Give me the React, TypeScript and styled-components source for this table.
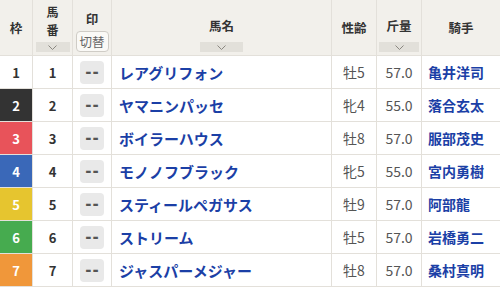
import styled, { createGlobalStyle } from 'styled-components';

interface Horse {
  waku: number;
  umaban: number;
  name: string;
  sexAge: string;
  weight: string;
  jockey: string;
}

const horses: Horse[] = [
  { waku: 1, umaban: 1, name: 'レアグリフォン', sexAge: '牡5', weight: '57.0', jockey: '亀井洋司' },
  { waku: 2, umaban: 2, name: 'ヤマニンパッセ', sexAge: '牝4', weight: '55.0', jockey: '落合玄太' },
  { waku: 3, umaban: 3, name: 'ボイラーハウス', sexAge: '牡8', weight: '57.0', jockey: '服部茂史' },
  { waku: 4, umaban: 4, name: 'モノノフブラック', sexAge: '牝5', weight: '55.0', jockey: '宮内勇樹' },
  { waku: 5, umaban: 5, name: 'スティールペガサス', sexAge: '牡9', weight: '57.0', jockey: '阿部龍' },
  { waku: 6, umaban: 6, name: 'ストリーム', sexAge: '牡5', weight: '57.0', jockey: '岩橋勇二' },
  { waku: 7, umaban: 7, name: 'ジャスパーメジャー', sexAge: '牡8', weight: '57.0', jockey: '桑村真明' },
];

const wakuColors: Record<number, { bg: string; fg: string }> = {
  1: { bg: '#ffffff', fg: '#333333' },
  2: { bg: '#333333', fg: '#ffffff' },
  3: { bg: '#e8535a', fg: '#ffffff' },
  4: { bg: '#3a68b8', fg: '#ffffff' },
  5: { bg: '#e6c52f', fg: '#ffffff' },
  6: { bg: '#46ab4f', fg: '#ffffff' },
  7: { bg: '#f0973a', fg: '#ffffff' },
};

const GlobalStyle = createGlobalStyle`
  html, body {
    margin: 0;
    padding: 0;
    background: #ffffff;
  }
  body {
    font-family: "Noto Sans CJK JP", "Noto Sans", sans-serif;
  }
`;

const Table = styled.div`
  width: 500px;
  display: grid;
  grid-template-columns: 32px 39px 38px 219px 44px 44px 78px;
  grid-auto-rows: 32px;
  grid-template-rows: 55px;
  gap: 1px;
  background: #e3e0da;
  border-bottom: 1px solid #e3e0da;
`;

const HeaderCell = styled.div<{ $end?: boolean }>`
  background: #f2f0eb;
  display: flex;
  flex-direction: column;
  align-items: center;
  justify-content: ${(p) => (p.$end ? 'flex-end' : 'center')};
  padding-bottom: ${(p) => (p.$end ? '3px' : '0')};
  box-sizing: border-box;
  font-size: 12.5px;
  font-weight: 700;
  color: #333333;
`;

const HeaderLabel = styled.div<{ $gap?: number }>`
  line-height: 17px;
  text-align: center;
  margin-bottom: ${(p) => p.$gap ?? 0}px;
`;

const StackedLabel = styled.div`
  display: flex;
  flex-direction: column;
  align-items: center;
  margin-bottom: 3px;
  line-height: 18px;
  font-size: 12px;
`;

const SortBar = styled.div<{ $width: number }>`
  width: ${(p) => p.$width}px;
  height: 10px;
  background: #e2e0da;
  display: flex;
  align-items: center;
  justify-content: center;
`;

const SwitchButton = styled.div`
  width: 33px;
  height: 21px;
  box-sizing: border-box;
  border: 1px solid #cfccc6;
  border-radius: 4px;
  background: #faf9f6;
  font-size: 12.5px;
  font-weight: 400;
  color: #666666;
  display: flex;
  align-items: center;
  justify-content: center;
`;

const Cell = styled.div<{ $align?: 'left' | 'center' }>`
  background: #ffffff;
  display: flex;
  align-items: center;
  justify-content: ${(p) => (p.$align === 'left' ? 'flex-start' : 'center')};
  padding-left: ${(p) => (p.$align === 'left' ? '7px' : '0')};
  box-sizing: border-box;
  white-space: nowrap;
  overflow: hidden;
`;

const WakuCell = styled(Cell)<{ $bg: string; $fg: string }>`
  background: ${(p) => p.$bg};
  color: ${(p) => p.$fg};
  font-size: 13px;
  font-weight: 700;
`;

const NumberCell = styled(Cell)`
  font-size: 13px;
  font-weight: 700;
  color: #333333;
`;

const MarkButton = styled.div`
  width: 24px;
  height: 23px;
  border-radius: 4px;
  background: #e9e9e9;
  color: #555555;
  font-family: "DejaVu Sans", sans-serif;
  font-size: 15px;
  font-weight: 700;
  letter-spacing: 1px;
  padding-left: 1px;
  box-sizing: border-box;
  display: flex;
  align-items: center;
  justify-content: center;
`;

const NameCell = styled(Cell)`
  font-size: 15px;
  font-weight: 700;
  color: #1b3fa6;
`;

const PlainCell = styled(Cell)`
  font-size: 14px;
  color: #555555;
`;

const JockeyCell = styled(Cell)`
  padding-left: 6px;
  font-size: 14px;
  font-weight: 700;
  color: #1b3fa6;
`;

const Chevron = () => (
  <svg width="9" height="5" viewBox="0 0 9 5">
    <path d="M0.5 0.5 L4.5 4.5 L8.5 0.5" fill="none" stroke="#8a8780" strokeWidth="1" />
  </svg>
);

export default function App() {
  return (
    <>
      <GlobalStyle />
      <Table>
        <HeaderCell>枠</HeaderCell>
        <HeaderCell $end>
          <StackedLabel>
            <span>馬</span>
            <span>番</span>
          </StackedLabel>
          <SortBar $width={34}>
            <Chevron />
          </SortBar>
        </HeaderCell>
        <HeaderCell $end>
          <HeaderLabel $gap={4}>印</HeaderLabel>
          <SwitchButton>切替</SwitchButton>
        </HeaderCell>
        <HeaderCell $end>
          <HeaderLabel $gap={8}>馬名</HeaderLabel>
          <SortBar $width={43}>
            <Chevron />
          </SortBar>
        </HeaderCell>
        <HeaderCell>性齢</HeaderCell>
        <HeaderCell $end>
          <HeaderLabel $gap={8}>斤量</HeaderLabel>
          <SortBar $width={40}>
            <Chevron />
          </SortBar>
        </HeaderCell>
        <HeaderCell>騎手</HeaderCell>

        {horses.map((h) => (
          <Row key={h.umaban} horse={h} />
        ))}
      </Table>
    </>
  );
}

const Row = ({ horse }: { horse: Horse }) => {
  const c = wakuColors[horse.waku];
  return (
    <>
      <WakuCell $bg={c.bg} $fg={c.fg}>{horse.waku}</WakuCell>
      <NumberCell>{horse.umaban}</NumberCell>
      <Cell>
        <MarkButton>--</MarkButton>
      </Cell>
      <NameCell $align="left">{horse.name}</NameCell>
      <PlainCell>{horse.sexAge}</PlainCell>
      <PlainCell>{horse.weight}</PlainCell>
      <JockeyCell $align="left">{horse.jockey}</JockeyCell>
    </>
  );
};
